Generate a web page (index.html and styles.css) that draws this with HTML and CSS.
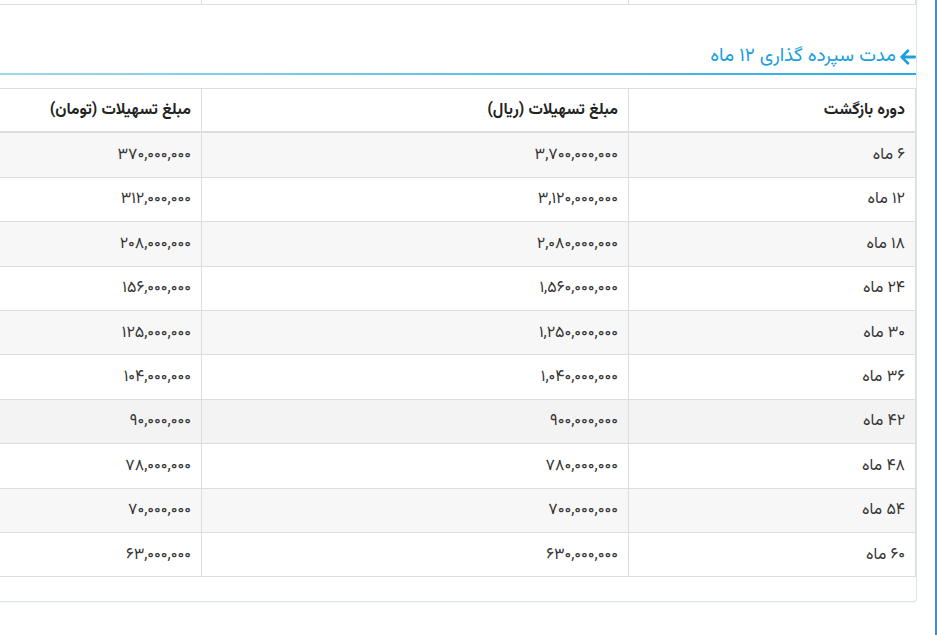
FILE: index.html
```html
<!DOCTYPE html>
<html lang="fa" dir="rtl">
<head>
<meta charset="utf-8">
<title>جدول تسهیلات</title>
<link rel="stylesheet" href="styles.css">
</head>
<body>
<div class="layout">
  <div class="edge"></div>
  <div class="content">
    <div class="card">
      <table class="table prev">
        <colgroup><col class="c1"><col class="c2"><col class="c3"></colgroup>
        <tbody><tr><td></td><td></td><td></td></tr></tbody>
      </table>
      <h3 class="section-title">
        <svg class="arrow" viewBox="0 0 448 512" aria-hidden="true"><path d="M257.5 445.1l-22.2 22.2c-9.4 9.4-24.6 9.4-33.9 0L7 273c-9.4-9.4-9.4-24.6 0-33.9L201.4 44.7c9.4-9.4 24.6-9.4 33.9 0l22.2 22.2c9.5 9.5 9.3 25-.4 34.3L136.6 216H424c13.3 0 24 10.7 24 24v32c0 13.3-10.7 24-24 24H136.6l120.5 114.8c9.8 9.3 10 24.8.4 34.3z"/></svg>
        <span>مدت سپرده گذاری ۱۲ ماه</span>
      </h3>
      <table class="table data">
        <colgroup><col class="c1"><col class="c2"><col class="c3"></colgroup>
        <thead>
          <tr><th>دوره بازگشت</th><th>مبلغ تسهیلات (ریال)</th><th>مبلغ تسهیلات (تومان)</th></tr>
        </thead>
        <tbody>
          <tr><td>۶ ماه</td><td>۳,۷۰۰,۰۰۰,۰۰۰</td><td>۳۷۰,۰۰۰,۰۰۰</td></tr>
          <tr><td>۱۲ ماه</td><td>۳,۱۲۰,۰۰۰,۰۰۰</td><td>۳۱۲,۰۰۰,۰۰۰</td></tr>
          <tr><td>۱۸ ماه</td><td>۲,۰۸۰,۰۰۰,۰۰۰</td><td>۲۰۸,۰۰۰,۰۰۰</td></tr>
          <tr><td>۲۴ ماه</td><td>۱,۵۶۰,۰۰۰,۰۰۰</td><td>۱۵۶,۰۰۰,۰۰۰</td></tr>
          <tr><td>۳۰ ماه</td><td>۱,۲۵۰,۰۰۰,۰۰۰</td><td>۱۲۵,۰۰۰,۰۰۰</td></tr>
          <tr><td>۳۶ ماه</td><td>۱,۰۴۰,۰۰۰,۰۰۰</td><td>۱۰۴,۰۰۰,۰۰۰</td></tr>
          <tr class="hover"><td>۴۲ ماه</td><td>۹۰۰,۰۰۰,۰۰۰</td><td>۹۰,۰۰۰,۰۰۰</td></tr>
          <tr><td>۴۸ ماه</td><td>۷۸۰,۰۰۰,۰۰۰</td><td>۷۸,۰۰۰,۰۰۰</td></tr>
          <tr><td>۵۴ ماه</td><td>۷۰۰,۰۰۰,۰۰۰</td><td>۷۰,۰۰۰,۰۰۰</td></tr>
          <tr><td>۶۰ ماه</td><td>۶۳۰,۰۰۰,۰۰۰</td><td>۶۳,۰۰۰,۰۰۰</td></tr>
        </tbody>
      </table>
    </div>
  </div>
</div>
</body>
</html>
```
FILE: styles.css
```css
html, body {
  margin: 0;
  padding: 0;
  background: #fff;
  overflow: hidden;
  height: 100%;
}
body {
  font-family: "Vazirmatn", "Noto Sans Arabic", "Noto Naskh Arabic", "DejaVu Sans", sans-serif;
  font-size: 16px;
  color: #333;
}
.layout {
  display: flex;
  flex-direction: row;
  height: 635px;
  width: 937px;
  overflow: hidden;
}
.edge {
  flex: none;
  width: 2px;
  background: #3f8fcf;
  height: 100%;
}
.content {
  flex: none;
  margin-right: 18px;
}
.card {
  width: 1002px;
  margin-top: -40px;
  border: 1px solid #d4e7ee;
  border-top: none;
  border-radius: 0 0 4px 4px;
  padding-bottom: 24px;
  box-shadow: 0 1px 1px rgba(0, 0, 0, 0.03);
}
.table {
  width: 1001px;
  border-collapse: collapse;
  table-layout: fixed;
}
.c1 { width: 287px; }
.c2 { width: 427px; }
.c3 { width: 287px; }
.table td, .table th {
  border: 1px solid #dddddd;
  padding: 2px 10px 0;
  height: 41.4px;
  text-align: right;
  vertical-align: middle;
  line-height: 22px;
}
.table td {
  color: #333;
}
.table th {
  font-weight: bold;
  font-size: 16px;
  color: #222;
  border-bottom: 2px solid #dddddd;
  height: 40.4px;
}
.prev td {
  height: 44px;
  padding: 0;
  border-top: none;
}
.data tbody tr:nth-child(odd) td {
  background: #f7f7f7;
}
.data tbody tr.hover td {
  background: #f3f3f3;
}
.section-title {
  position: relative;
  margin: 36px 0 15px;
  padding: 0;
  display: flex;
  align-items: center;
  gap: 4px;
  height: 32px;
  font-size: 19px;
  font-weight: normal;
  color: #1a9fe0;
  line-height: 32px;
}
.section-title::after {
  content: "";
  position: absolute;
  right: 0;
  left: 0;
  bottom: -2px;
  height: 2px;
  background: linear-gradient(to left, #27ace3, #a9dcef);
}
.arrow {
  width: 16px;
  height: 18px;
  fill: #1a9fe0;
  flex: none;
}
```
